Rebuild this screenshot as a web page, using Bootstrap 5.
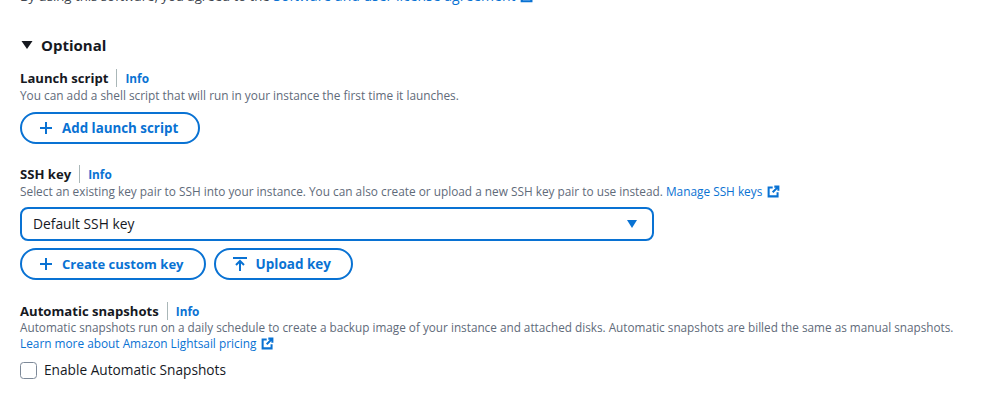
<!DOCTYPE html>
<html lang="en">
<head>
<meta charset="UTF-8">
<title>Create instance</title>
<link href="https://cdn.jsdelivr.net/npm/bootstrap@5.3.3/dist/css/bootstrap.min.css" rel="stylesheet">
<style>
  html, body { height: 402px; overflow: hidden; }
  body { font-family: "Open Sans", "Noto Sans", sans-serif; font-size: 14px; line-height: 20px; color: #16191f; background: #fff; }
  a { color: #0972d3; text-decoration: none; }
  .page-wrap { padding: 0 20px; margin-top: -13px; }
  .legal-line { font-size: 13.2px; line-height: 18px; color: #414750; height: 18px; white-space: nowrap; }
  .legal-line a { font-size: 14px; }
  .legal-line .ext-icon { width: 14px; height: 14px; margin-left: 1px; }
  .section-title { font-size: 15px; font-weight: 700; line-height: 22px; margin-top: 29px; margin-bottom: 13px; }
  .caret-down { width: 12px; height: 12px; margin: 0 8px 0 1px; fill: #16191f; }
  .field-label { font-size: 13.1px; font-weight: 700; line-height: 18px; }
  .info-link { font-size: 11.8px; font-weight: 700; line-height: 18px; border-left: 1px solid #aab7b8; margin-left: 8px; padding-left: 8px; }
  .hint-text { font-size: 11.83px; line-height: 16px; color: #5f6b7a; white-space: nowrap; }
  .hint-tight { font-size: 11.76px; }
  .pill-btn { display: inline-flex; align-items: center; height: 32px; padding: 0 20px 0 16px; border: 2px solid #0972d3; border-radius: 16px; background: #fff; color: #0972d3; font-size: 13.2px; font-weight: 700; line-height: 18px; }
  .pill-btn:hover { background: #fff; color: #0972d3; border-color: #0972d3; }
  .btn-icon { width: 16px; height: 16px; margin-right: 8px; stroke: #0972d3; stroke-width: 2; fill: none; }
  .ext-icon { width: 13px; height: 13px; margin-left: 2px; stroke: #0972d3; stroke-width: 2.5; fill: none; vertical-align: -2px; }
  .add-btn { margin-top: 9px; font-size: 13.35px; }
  .create-btn { font-size: 13.05px; }
  .upload-btn { font-size: 13.5px; }
  .ssh-head { margin-top: 21px; }
  .snap-head { margin-top: 22px; margin-bottom: -1px; }
  .key-select { height: 34px; width: 634px; padding: 0 15px 0 11px; border: 2px solid #0972d3; border-radius: 8px; font-size: 13.8px; margin-top: 8px; margin-bottom: 7px; }
  .select-caret { width: 10px; height: 8px; fill: #0972d3; }
  .snap-row { margin-top: 9px; }
  .snap-check { width: 17px; height: 17px; margin: 0 7px 0 0; border: 1px solid #7d8998; border-radius: 4px; }
  .snap-label { font-size: 13.7px; }
</style>
</head>
<body>
<div class="page-wrap">
  <div class="legal-line">By using this software, you agreed to the <a href="#">Software and user license agreement</a>
    <svg class="ext-icon" viewBox="0 0 16 16"><path d="M9 2h5v5M14 2 7 9M7 3H2v11h11V9"/></svg></div>

  <div class="section-title d-flex align-items-center">
    <svg class="caret-down" viewBox="0 0 12 12"><path d="M.5 2h11L6 10z"/></svg>Optional
  </div>

  <div class="d-flex align-items-center"><span class="field-label">Launch script</span><a class="info-link" href="#">Info</a></div>
  <div class="hint-text">You can add a shell script that will run in your instance the first time it launches.</div>
  <button type="button" class="btn pill-btn add-btn">
    <svg class="btn-icon" viewBox="0 0 16 16"><path d="M8 2v12M2 8h12"/></svg>Add launch script
  </button>

  <div class="d-flex align-items-center ssh-head"><span class="field-label">SSH key</span><a class="info-link" href="#">Info</a></div>
  <div class="hint-text">Select an existing key pair to SSH into your instance. You can also create or upload a new SSH key pair to use instead. <a href="#">Manage SSH keys</a>
    <svg class="ext-icon" viewBox="0 0 16 16"><path d="M9 2h5v5M14 2 7 9M7 3H2v11h11V9"/></svg></div>
  <div class="key-select d-flex align-items-center justify-content-between">
    <span>Default SSH key</span>
    <svg class="select-caret" viewBox="0 0 10 8"><path d="M0 0h10L5 8z"/></svg>
  </div>
  <div class="d-flex gap-2">
    <button type="button" class="btn pill-btn create-btn">
      <svg class="btn-icon" viewBox="0 0 16 16"><path d="M8 2v12M2 8h12"/></svg>Create custom key
    </button>
    <button type="button" class="btn pill-btn upload-btn">
      <svg class="btn-icon" viewBox="0 0 16 16"><path d="M1 2h14M8 15V5M4 9l4-4 4 4"/></svg>Upload key
    </button>
  </div>

  <div class="d-flex align-items-center snap-head"><span class="field-label">Automatic snapshots</span><a class="info-link" href="#">Info</a></div>
  <div class="hint-text hint-tight">Automatic snapshots run on a daily schedule to create a backup image of your instance and attached disks. Automatic snapshots are billed the same as manual snapshots.</div>
  <div class="hint-text"><a href="#">Learn more about Amazon Lightsail pricing</a>
    <svg class="ext-icon" viewBox="0 0 16 16"><path d="M9 2h5v5M14 2 7 9M7 3H2v11h11V9"/></svg></div>
  <div class="d-flex align-items-center snap-row">
    <input class="form-check-input snap-check" type="checkbox" id="snapCheck">
    <label class="snap-label" for="snapCheck">Enable Automatic Snapshots</label>
  </div>
</div>
</body>
</html>
